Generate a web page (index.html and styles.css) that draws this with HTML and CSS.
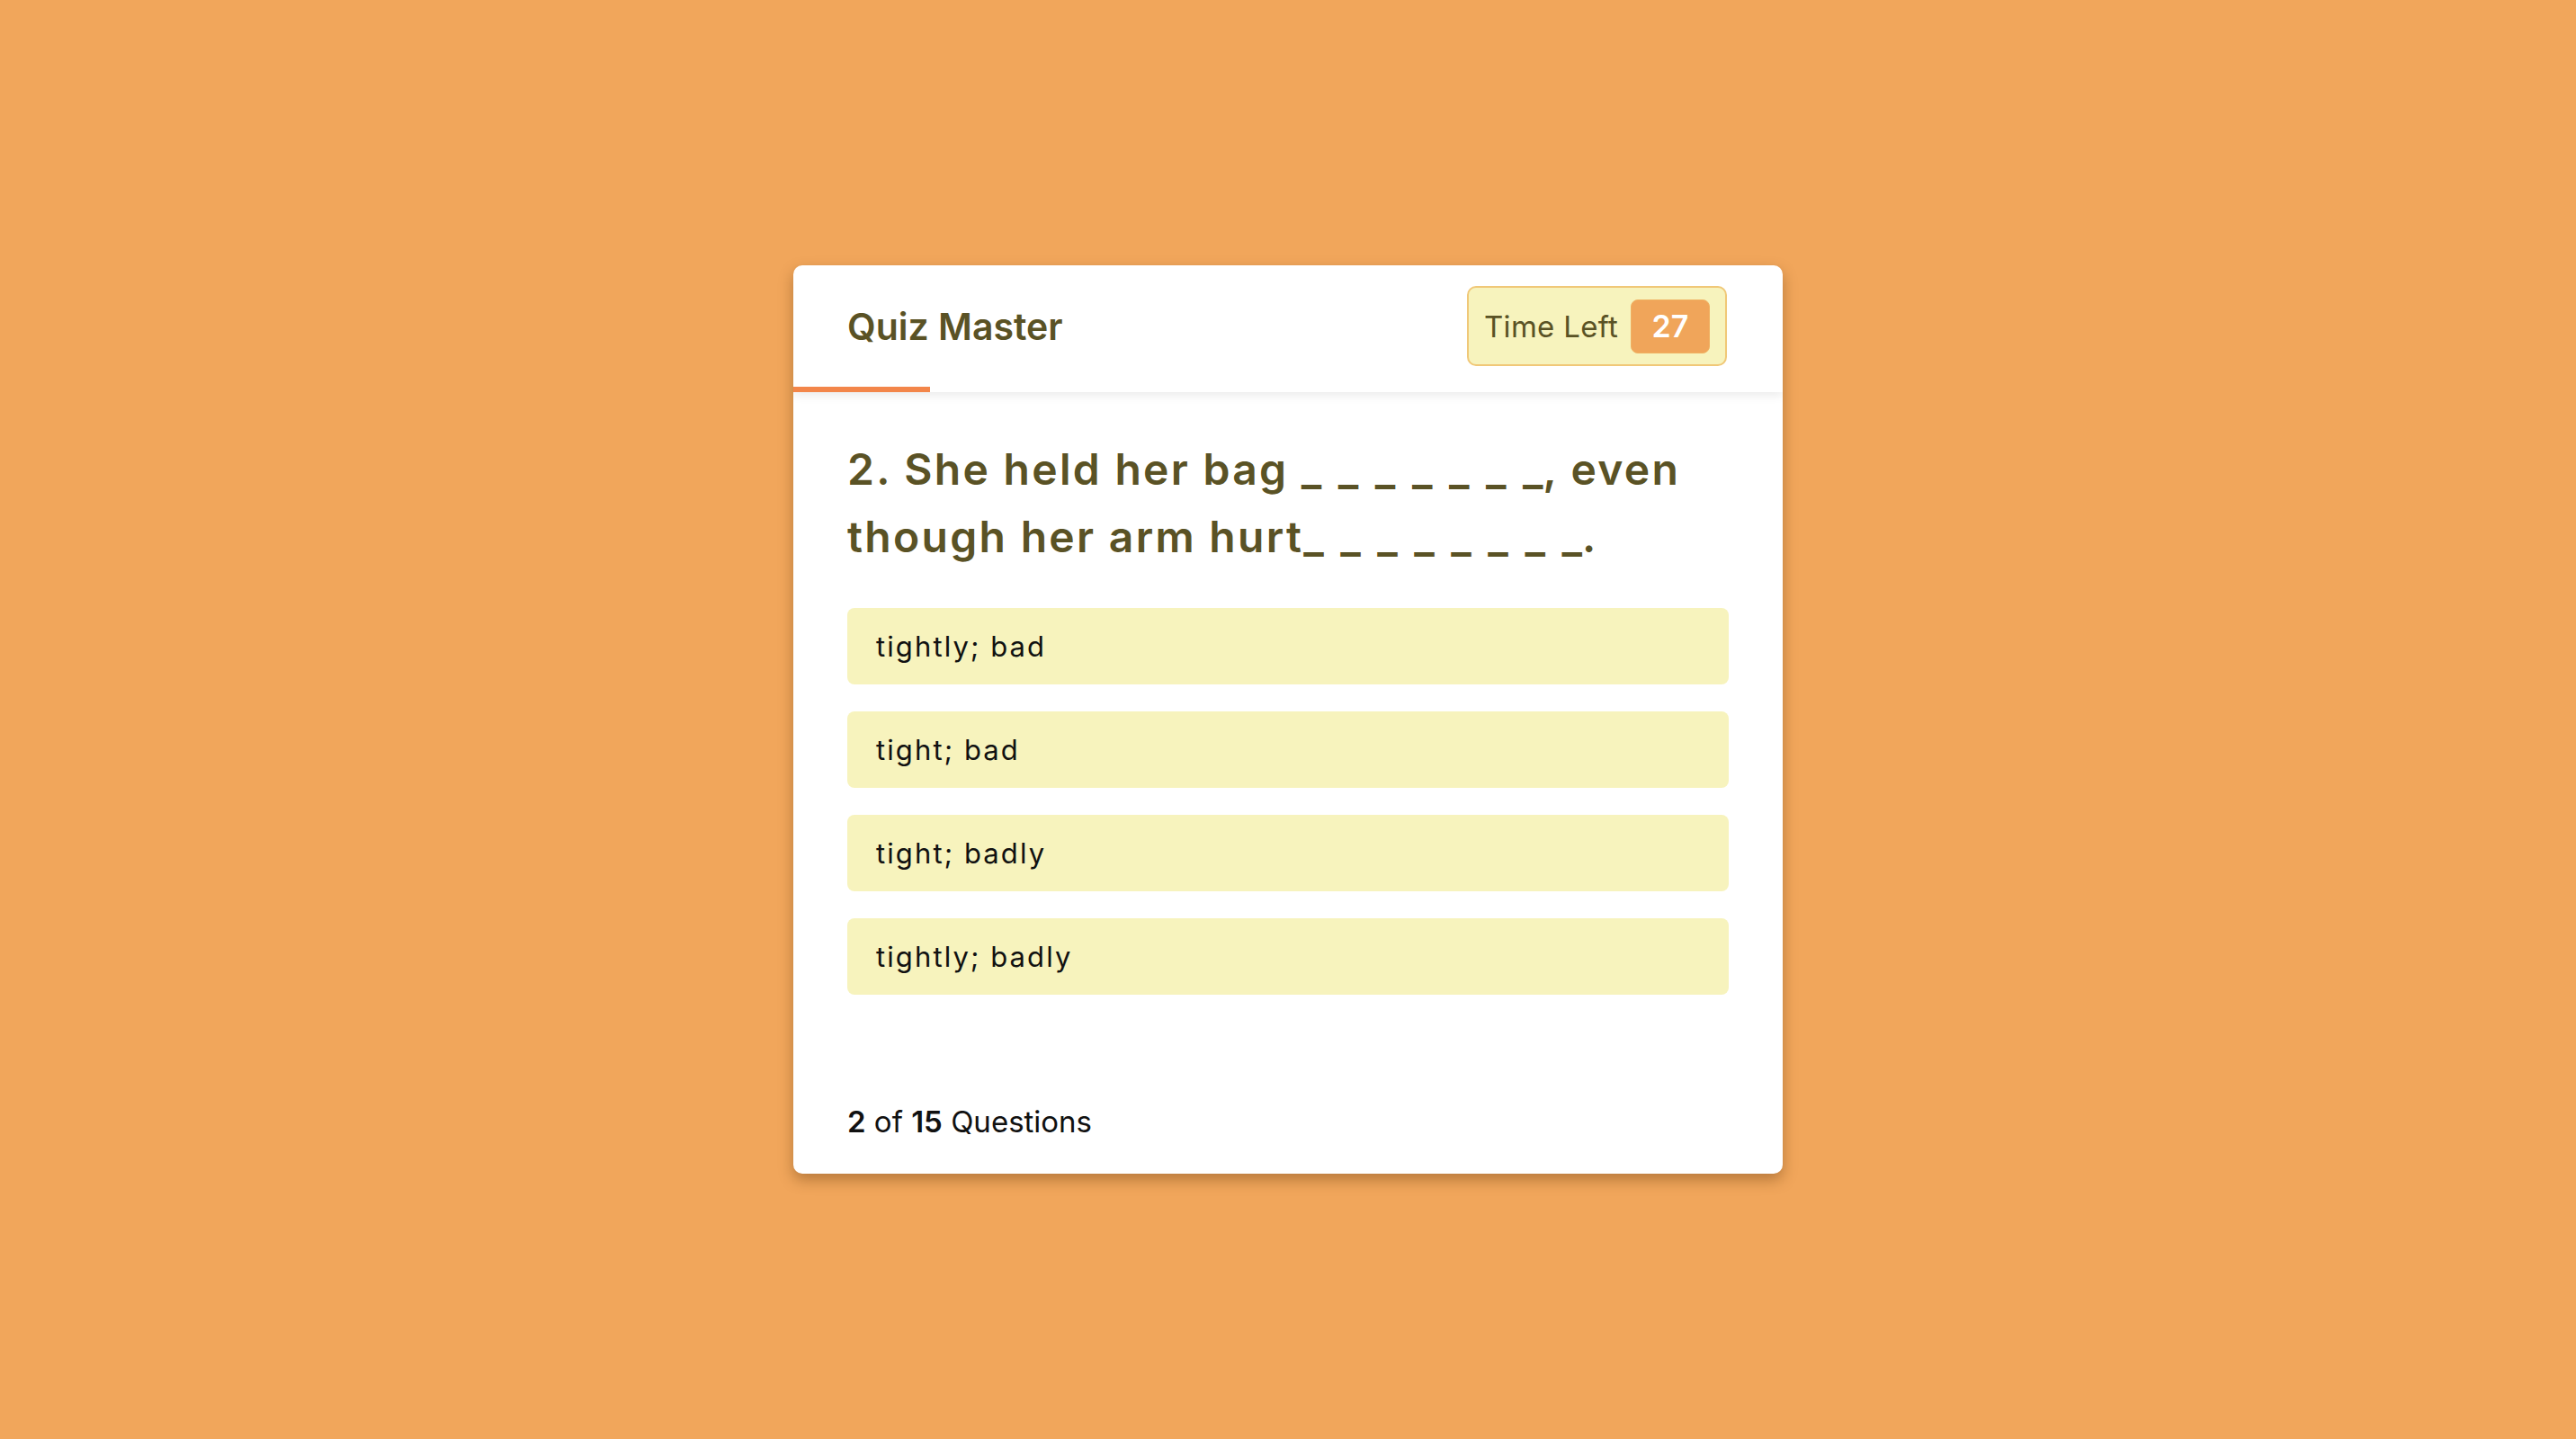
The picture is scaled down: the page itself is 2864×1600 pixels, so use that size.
FILE: index.html
```html
<!DOCTYPE html>
<html lang="en">
<head>
<meta charset="utf-8">
<title>Quiz Master</title>
<link rel="stylesheet" href="styles.css">
</head>
<body>
<div class="card">
  <header class="card-header">
    <div class="header-row">
      <h1 class="title">Quiz Master</h1>
      <div class="timer">
        <span class="timer-label">Time Left</span>
        <span class="timer-value">27</span>
      </div>
    </div>
    <div class="progress-track"><div class="progress-bar"></div></div>
  </header>
  <section class="card-body">
    <h2 class="question"><span>2. She held her bag </span><span class="blank">______</span><span class="blank-end">_</span><span>, even</span> <span>though her arm hurt</span><span class="blank">_______</span><span class="blank-end">_</span><span>.</span></h2>
    <div class="options">
      <div class="option">tightly; bad</div>
      <div class="option">tight; bad</div>
      <div class="option">tight; badly</div>
      <div class="option">tightly; badly</div>
    </div>
  </section>
  <footer class="card-footer">
    <p class="count"><b>2</b> of <b>15</b> Questions</p>
  </footer>
</div>
</body>
</html>
```
FILE: styles.css
```css
* { box-sizing: border-box; }
html, body { margin: 0; padding: 0; }
body {
  background: #f1a65b;
  font-family: Inter, "Open Sans", sans-serif;
  height: 100vh;
  display: flex;
  align-items: center;
  justify-content: center;
}
.card {
  width: 1100px;
  height: 1010px;
  background: #ffffff;
  border-radius: 10px;
  box-shadow: 0 7px 16px rgba(90, 50, 10, 0.38);
  display: flex;
  flex-direction: column;
  overflow: hidden;
}
.card-header {
  height: 141px;
  display: flex;
  flex-direction: column;
  box-shadow: 0 4px 10px rgba(0, 0, 0, 0.08);
  position: relative;
  z-index: 1;
}
.header-row {
  flex: 1;
  display: flex;
  align-items: center;
  justify-content: space-between;
  padding: 0 62px 0 60px;
}
.title {
  margin: 0;
  font-size: 41px;
  font-weight: 600;
  color: #5a5225;
}
.timer {
  width: 289px;
  height: 89px;
  background: #f7f3bd;
  border: 2px solid #f0c878;
  border-radius: 10px;
  display: flex;
  align-items: center;
  justify-content: space-between;
  padding: 0 17px 0 17px;
}
.timer-label {
  font-size: 33px;
  letter-spacing: 0.3px;
  color: #5a5225;
}
.timer-value {
  width: 88px;
  height: 60px;
  background: #f0a55a;
  border: 1px solid #f0b060;
  border-radius: 8px;
  color: #ffffff;
  font-size: 34px;
  font-weight: 600;
  display: flex;
  align-items: center;
  justify-content: center;
}
.progress-track {
  height: 6px;
}
.progress-bar {
  width: 13.8%;
  height: 6px;
  background: #f3864a;
}
.card-body {
  padding: 48px 60px 0 60px;
}
.question {
  margin: 0 0 42px 0;
  font-size: 48px;
  line-height: 75px;
  font-weight: 600;
  letter-spacing: 2.3px;
  color: #5a5225;
}
.blank {
  letter-spacing: 18.5px;
}
.blank-end {
  letter-spacing: 0;
}
.options {
  display: flex;
  flex-direction: column;
  gap: 30px;
}
.option {
  height: 85px;
  background: #f7f3bd;
  border-radius: 8px;
  padding: 0 32px;
  display: flex;
  align-items: center;
  font-size: 31px;
  letter-spacing: 2.1px;
  color: #111111;
}
.card-footer {
  margin-top: auto;
  padding: 0 60px 38px 60px;
}
.count {
  margin: 0;
  font-size: 33px;
  color: #111111;
}
.count b {
  font-weight: 600;
}
```
